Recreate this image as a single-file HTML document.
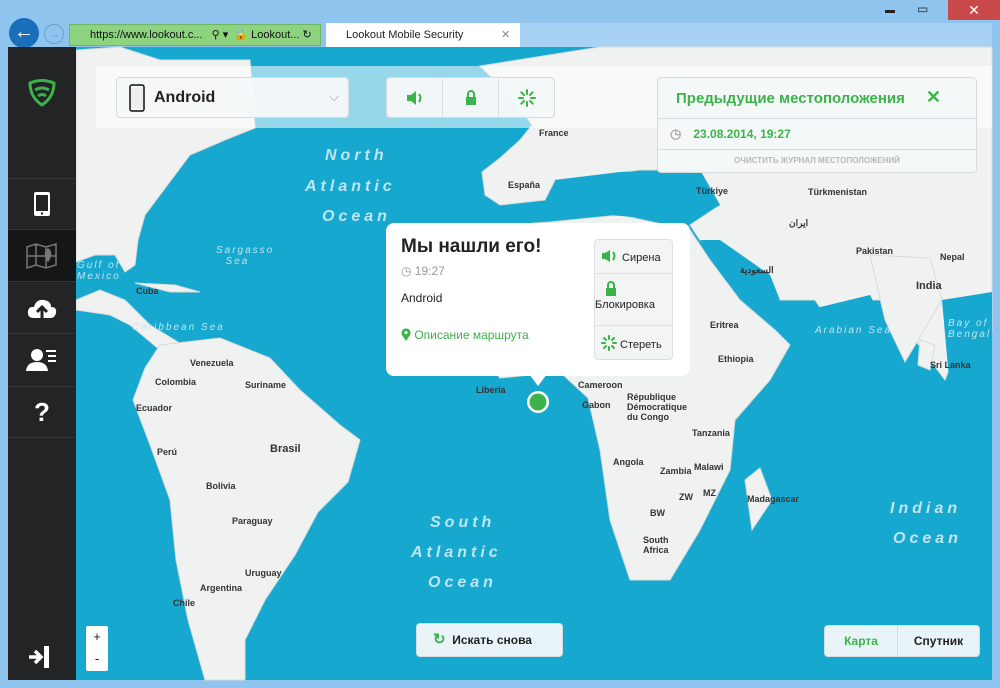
<!DOCTYPE html>
<html><head><meta charset="utf-8"><style>
*{box-sizing:border-box;margin:0;padding:0}
body{width:1000px;height:688px;overflow:hidden;background:#8fc4ef;font-family:"Liberation Sans",sans-serif;position:relative}
.abs{position:absolute}
.side{left:8px;top:47px;width:68px;height:633px;background:#222425}
.si{position:absolute;left:0;width:68px;border-top:1px solid #333637;display:flex;align-items:center;justify-content:center}
.box{background:rgba(245,248,248,.96);border:1px solid #d6dcdd;border-radius:4px}
.lbl{position:absolute;font-size:9px;color:#333;font-weight:bold}
.oc{position:absolute;font-style:italic;color:#bde6f3;letter-spacing:4px;font-size:16px;font-weight:bold}
.ocs{position:absolute;font-style:italic;color:#bde6f3;letter-spacing:2px;font-size:10px}
</style></head><body>
<!-- browser chrome -->
<div class="abs" style="left:0;top:0;width:1000px;height:47px;background:#8fc4ef"></div>
<div class="abs" style="left:948px;top:0;width:52px;height:20px;background:#c9494a;color:#fff;text-align:center;font-size:14px;line-height:20px">✕</div>
<div class="abs" style="left:917px;top:2px;font-size:12px;color:#222">▭</div>
<div class="abs" style="left:885px;top:10px;width:10px;height:3px;background:#222"></div>
<div class="abs" style="left:928px;top:24px;font-size:15px;color:#fff">⌂ ★ ⚙</div>
<div class="abs" style="left:9px;top:18px;width:30px;height:30px;border-radius:50%;background:#1a6fba;color:#fff;font-size:20px;text-align:center;line-height:29px;font-weight:bold">←</div>
<div class="abs" style="left:44px;top:24px;width:20px;height:20px;border-radius:50%;border:1px solid #6a9fcf;color:#6a9fcf;font-size:12px;text-align:center;line-height:18px">→</div>
<div class="abs" style="left:69px;top:24px;width:252px;height:22px;background:#8ed37f;border:1px solid #6fb663;font-size:11px;line-height:20px;padding-left:20px;color:#111">https://www.lookout.c... &nbsp; ⚲ ▾ &nbsp;🔒 Lookout... ↻</div>
<div class="abs" style="left:326px;top:23px;width:194px;height:24px;background:#fff;font-size:11px;line-height:24px;padding-left:20px;color:#222">Lookout Mobile Security <span style="position:absolute;left:175px;color:#888">✕</span></div>
<div class="abs" style="left:520px;top:23px;width:472px;height:24px;background:#a8d2f3"></div>
<!-- map -->
<svg class="abs" style="left:0;top:0" width="1000" height="688">
<rect x="76" y="47" width="916" height="633" fill="#17a8cf"/>
<g fill="#f0f1f1" stroke="#d9dcdc">
<polygon points="76,50 120,47 160,60 250,60 255,128 225,140 190,155 175,175 160,195 145,215 138,240 135,265 125,272 115,255 95,255 76,262"/>
<polygon points="76,300 100,290 125,300 150,325 178,342 160,350 130,325 110,315 76,310"/>
<polygon points="135,283 175,285 200,292 170,292"/>
<polygon points="160,345 220,338 270,358 300,390 340,425 360,440 348,482 318,512 295,555 265,600 245,640 245,680 205,680 188,620 176,560 170,500 150,445 133,400 145,368"/>
<polygon points="480,66 600,47 992,47 992,330 960,342 945,380 915,340 880,300 850,300 845,345 815,300 780,300 740,270 700,240 690,225 720,205 700,170 640,170 600,175 555,180 545,200 500,205 485,195 482,172 500,158 520,140 532,125 515,100"/>
<polygon points="550,222 620,215 690,230 710,260 740,300 775,330 790,345 770,380 735,420 730,470 700,530 670,580 630,580 610,520 600,450 588,398 560,372 500,378 470,340 458,300 470,262 495,226"/>
<polygon points="745,480 760,468 772,500 752,530"/>
<polygon points="870,255 930,258 942,300 905,362 885,320"/>
<polygon points="920,340 935,345 930,370 918,365"/>
</g>
<polygon points="700,240 740,280 780,300 770,275 720,240" fill="#17a8cf"/>
<polygon points="555,180 620,172 700,170 720,205 690,222 610,215 560,212" fill="#17a8cf"/>
<polygon points="800,312 870,295 888,330 900,372 800,380 792,345" fill="#17a8cf"/>
<polygon points="942,300 992,292 992,400 950,390" fill="#17a8cf"/>
<rect x="96" y="66" width="896" height="62" fill="#fff" opacity="0.55"/>
<circle cx="538" cy="402" r="11" fill="#fff"/><circle cx="538" cy="402" r="8.5" fill="#3cb34a"/>
</svg>
<div class="oc" style="left:325px;top:147px">North</div>
<div class="oc" style="left:305px;top:178px">Atlantic</div>
<div class="oc" style="left:322px;top:208px">Ocean</div>
<div class="oc" style="left:430px;top:514px">South</div>
<div class="oc" style="left:411px;top:544px">Atlantic</div>
<div class="oc" style="left:428px;top:574px">Ocean</div>
<div class="oc" style="left:890px;top:500px">Indian</div>
<div class="oc" style="left:893px;top:530px">Ocean</div>
<div class="ocs" style="left:216px;top:245px">Sargasso<br>&nbsp;&nbsp;Sea</div>
<div class="ocs" style="left:77px;top:260px">Gulf of<br>Mexico</div>
<div class="ocs" style="left:132px;top:322px">Caribbean Sea</div>
<div class="ocs" style="left:815px;top:325px">Arabian Sea</div>
<div class="ocs" style="left:948px;top:318px">Bay of<br>Bengal</div>
<div class="lbl" style="left:190px;top:358px">Venezuela</div>
<div class="lbl" style="left:155px;top:377px">Colombia</div>
<div class="lbl" style="left:136px;top:403px">Ecuador</div>
<div class="lbl" style="left:245px;top:380px">Suriname</div>
<div class="lbl" style="left:270px;top:443px;font-size:11px">Brasil</div>
<div class="lbl" style="left:157px;top:447px">Perú</div>
<div class="lbl" style="left:206px;top:481px">Bolivia</div>
<div class="lbl" style="left:232px;top:516px">Paraguay</div>
<div class="lbl" style="left:200px;top:583px">Argentina</div>
<div class="lbl" style="left:173px;top:598px">Chile</div>
<div class="lbl" style="left:245px;top:568px">Uruguay</div>
<div class="lbl" style="left:136px;top:286px">Cuba</div>
<div class="lbl" style="left:539px;top:128px">France</div>
<div class="lbl" style="left:508px;top:180px">España</div>
<div class="lbl" style="left:696px;top:186px">Türkiye</div>
<div class="lbl" style="left:808px;top:187px">Türkmenistan</div>
<div class="lbl" style="left:789px;top:218px">ایران</div>
<div class="lbl" style="left:856px;top:246px">Pakistan</div>
<div class="lbl" style="left:916px;top:280px;font-size:11px">India</div>
<div class="lbl" style="left:940px;top:252px">Nepal</div>
<div class="lbl" style="left:740px;top:265px">السعودية</div>
<div class="lbl" style="left:710px;top:320px">Eritrea</div>
<div class="lbl" style="left:718px;top:354px">Ethiopia</div>
<div class="lbl" style="left:578px;top:380px">Cameroon</div>
<div class="lbl" style="left:582px;top:400px">Gabon</div>
<div class="lbl" style="left:627px;top:392px">République<br>Démocratique<br>du Congo</div>
<div class="lbl" style="left:692px;top:428px">Tanzania</div>
<div class="lbl" style="left:613px;top:457px">Angola</div>
<div class="lbl" style="left:660px;top:466px">Zambia</div>
<div class="lbl" style="left:694px;top:462px">Malawi</div>
<div class="lbl" style="left:679px;top:492px">ZW</div>
<div class="lbl" style="left:703px;top:488px">MZ</div>
<div class="lbl" style="left:650px;top:508px">BW</div>
<div class="lbl" style="left:643px;top:535px">South<br>Africa</div>
<div class="lbl" style="left:747px;top:494px">Madagascar</div>
<div class="lbl" style="left:930px;top:360px">Sri Lanka</div>
<div class="lbl" style="left:476px;top:385px">Liberia</div>
<!-- sidebar -->
<div class="abs side">
 <div style="position:absolute;left:19px;top:32px"><svg width="30" height="28" viewBox="0 0 30 28" fill="none" stroke="#3cb34a" stroke-width="3"><path d="M3 4 Q15 -1 27 4 Q27 18 15 26 Q3 18 3 4Z"/><path d="M8 11 Q15 7 22 11"/><path d="M11 17 Q15 14 19 17"/></svg></div>
 <div class="si" style="top:131px;height:51px"><svg width="18" height="26"><rect x="1" y="1" width="16" height="24" rx="2" fill="#fff"/><rect x="3" y="4" width="12" height="16" fill="#222425"/><circle cx="9" cy="22.5" r="1.2" fill="#222425"/></svg></div>
 <div class="si" style="top:182px;height:52px;background:#151616"><svg width="32" height="26" fill="none" stroke="#777" stroke-width="1.5"><path d="M1 4 L10 1 L20 4 L30 1 V22 L20 25 L10 22 L1 25Z M10 1V22 M20 4V25 M1 13 H30"/><path d="M22 18 Q17 10 22 6 Q27 10 22 18Z" fill="#777"/></svg></div>
 <div class="si" style="top:234px;height:52px"><svg width="30" height="22"><path d="M7 21 Q0 21 1 14 Q2 9 7 10 Q9 2 17 3 Q24 4 24 10 Q30 10 29 16 Q28 21 23 21Z" fill="#fff"/><path d="M15 21 V12 M10 15 L15 10 L20 15" stroke="#222425" stroke-width="3" fill="none"/></svg></div>
 <div class="si" style="top:286px;height:53px"><svg width="32" height="24" fill="#fff"><circle cx="11" cy="7" r="6"/><path d="M0 23 Q1 14 11 14 Q21 14 22 23Z"/><rect x="20" y="2" width="10" height="2"/><rect x="22" y="7" width="8" height="2"/><rect x="22" y="12" width="8" height="2"/></svg></div>
 <div class="si" style="top:339px;height:52px;border-bottom:1px solid #333637;color:#fff;font-size:26px;font-weight:bold">?</div>
 <div style="position:absolute;left:20px;top:598px"><svg width="26" height="24"><rect x="16" y="1" width="5" height="22" fill="#fff"/><path d="M1 12 H12 M7 6 L13 12 L7 18" stroke="#fff" stroke-width="3.5" fill="none"/></svg></div>
</div>
<!-- top controls -->
<div class="abs box" style="left:116px;top:77px;width:233px;height:41px"><svg style="position:absolute;left:12px;top:6px" width="16" height="28"><rect x="1" y="1" width="14" height="26" rx="2" fill="none" stroke="#111" stroke-width="1.5"/><rect x="2" y="4" width="12" height="20" fill="#eee"/></svg><span style="position:absolute;left:37px;top:11px;font-size:16px;font-weight:bold;color:#222">Android</span><span style="position:absolute;right:9px;top:11px;color:#999;font-size:13px">⌵</span></div>
<div class="abs box" style="left:386px;top:77px;width:169px;height:41px;display:flex">
 <div style="flex:1;border-right:1px solid #dde;display:flex;align-items:center;justify-content:center"><svg width="18" height="16"><path d="M1 5 H5 L10 1 V15 L5 11 H1Z" fill="#3cb34a"/><path d="M13 4 Q16 8 13 12" stroke="#3cb34a" stroke-width="2" fill="none"/></svg></div>
 <div style="flex:1;border-right:1px solid #dde;display:flex;align-items:center;justify-content:center"><svg width="12" height="15"><path d="M3 7 V4 a3 3 0 0 1 6 0 V7" fill="none" stroke="#3cb34a" stroke-width="2"/><rect x="1" y="7" width="10" height="8" fill="#3cb34a"/></svg></div>
 <div style="flex:1;display:flex;align-items:center;justify-content:center"><svg width="18" height="18" stroke="#3cb34a" stroke-width="2" stroke-linecap="round"><path d="M9 1V5 M9 13V17 M1 9H5 M13 9H17 M3.3 3.3L6 6 M12 12L14.7 14.7 M3.3 14.7L6 12 M12 6L14.7 3.3"/></svg></div>
</div>
<div class="abs box" style="left:657px;top:77px;width:320px;height:96px">
 <div style="height:41px;border-bottom:1px solid #d6dcdd;padding:12px 0 0 18px;color:#3cb34a;font-size:15px;font-weight:bold">Предыдущие местоположения<span style="position:absolute;right:35px;top:9px;font-size:18px">✕</span></div>
 <div style="height:31px;border-bottom:1px solid #d6dcdd;padding:7px 0 0 12px;color:#3cb34a;font-size:12px;font-weight:bold"><span style="color:#aaa;font-size:13px;margin-right:12px">◷</span>23.08.2014, 19:27</div>
 <div style="text-align:center;font-size:8px;color:#b8b8b8;padding-top:6px;font-weight:bold">ОЧИСТИТЬ ЖУРНАЛ МЕСТОПОЛОЖЕНИЙ</div>
</div>
<!-- popup -->
<div class="abs" style="left:386px;top:223px;width:304px;height:153px;background:#fff;border-radius:8px"></div>
<div class="abs" style="left:529px;top:374px;width:0;height:0;border-left:9px solid transparent;border-right:9px solid transparent;border-top:12px solid #fff"></div>
<div class="abs" style="left:401px;top:236px;font-size:19px;font-weight:bold;color:#222">Мы нашли его!</div>
<div class="abs" style="left:401px;top:264px;font-size:12px;color:#999">◷ 19:27</div>
<div class="abs" style="left:401px;top:291px;font-size:12px;color:#222">Android</div>
<div class="abs" style="left:401px;top:328px;font-size:12px;color:#3cb34a"><svg width="10" height="13" style="vertical-align:-2px"><path d="M5 13 L1 7 A4.5 4.5 0 1 1 9 7Z" fill="#3cb34a"/><circle cx="5" cy="4.6" r="1.6" fill="#fff"/></svg> Описание маршрута</div>
<div class="abs" style="left:594px;top:239px;width:79px;height:121px;background:#f3f4f4;border:1px solid #dde0e0;border-radius:4px;font-size:11px;color:#222">
 <div style="height:34px;border-bottom:1px solid #dde0e0;padding:9px 0 0 6px"><svg width="18" height="14" style="vertical-align:-2px"><path d="M1 4 H4 L9 1 V13 L4 10 H1Z" fill="#3cb34a"/><path d="M12 3 Q15 7 12 11" stroke="#3cb34a" stroke-width="2" fill="none"/></svg> Сирена</div>
 <div style="height:52px;border-bottom:1px solid #dde0e0;padding:7px 0 0 0"><svg style="margin-left:10px" width="12" height="15"><path d="M3 7 V4 a3 3 0 0 1 6 0 V7" fill="none" stroke="#3cb34a" stroke-width="2"/><rect x="1" y="7" width="10" height="8" fill="#3cb34a"/></svg><br>Блокировка</div>
 <div style="padding:9px 0 0 6px"><svg width="16" height="16" style="vertical-align:-3px" stroke="#3cb34a" stroke-width="2" stroke-linecap="round"><path d="M8 1V4 M8 12V15 M1 8H4 M12 8H15 M3 3L5 5 M11 11L13 13 M3 13L5 11 M11 5L13 3"/></svg> Стереть</div>
</div>
<!-- bottom -->
<div class="abs" style="left:86px;top:626px;width:22px;height:45px;background:#fff;border-radius:2px;font-size:13px;text-align:center;line-height:22px;color:#222">+<br>-</div>
<div class="abs box" style="left:416px;top:623px;width:147px;height:34px;font-size:12px;font-weight:bold;color:#222;line-height:32px;padding-left:16px;background:#e8f4f8"><span style="color:#3cb34a;font-size:15px">↻</span> &nbsp;Искать снова</div>
<div class="abs box" style="left:824px;top:625px;width:156px;height:32px;font-size:12px;font-weight:bold;display:flex;background:#e8f4f8">
 <div style="width:73px;border-right:1px solid #cde;text-align:center;line-height:30px;color:#3cb34a">Карта</div>
 <div style="flex:1;text-align:center;line-height:30px;color:#222">Спутник</div>
</div>
</body></html>
